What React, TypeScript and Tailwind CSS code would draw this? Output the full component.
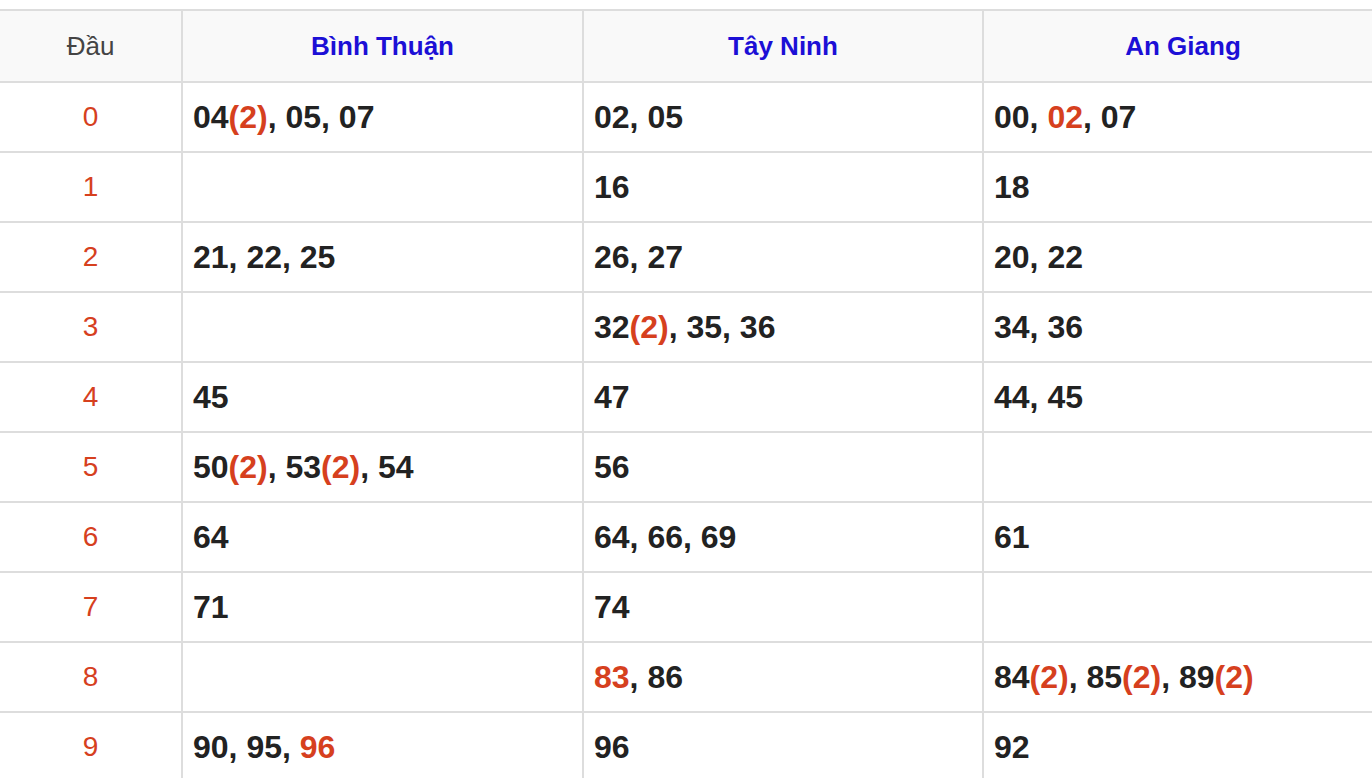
import React from 'react'

type Part = { t: string; red?: boolean }

const provinces = ['Bình Thuận', 'Tây Ninh', 'An Giang']

// each cell: list of numbers; "x2" means (2) suffix, "!" means whole number red
const rows: string[][] = [
  ['04x2, 05, 07', '02, 05', '00, !02, 07'],
  ['', '16', '18'],
  ['21, 22, 25', '26, 27', '20, 22'],
  ['', '32x2, 35, 36', '34, 36'],
  ['45', '47', '44, 45'],
  ['50x2, 53x2, 54', '56', ''],
  ['64', '64, 66, 69', '61'],
  ['71', '74', ''],
  ['', '!83, 86', '84x2, 85x2, 89x2'],
  ['90, 95, !96', '96', '92'],
]

function parse(cell: string): Part[] {
  if (!cell) return []
  const out: Part[] = []
  cell.split(', ').forEach((n, i) => {
    if (i > 0) out.push({ t: ', ' })
    if (n.startsWith('!')) {
      out.push({ t: n.slice(1), red: true })
    } else if (n.endsWith('x2')) {
      out.push({ t: n.slice(0, -2) })
      out.push({ t: '(2)', red: true })
    } else {
      out.push({ t: n })
    }
  })
  return out
}

const colW = ['w-[181px]', 'w-[401px]', 'w-[400px]', 'w-[400px]']

export default function App() {
  return (
    <div
      className="w-[1372px] h-[778px] overflow-hidden bg-white pt-[9px]"
      style={{ fontFamily: '"Liberation Sans", Arial, sans-serif' }}
    >
      <div className="w-[1382px] border-t-2 border-[#dddddd]">
        {/* Header */}
        <div className="flex h-[70px] bg-[#f9f9f9]">
          <div className={`${colW[0]} flex items-center justify-center text-[26px] text-[#444]`}>
            Đầu
          </div>
          {provinces.map((p, i) => (
            <div
              key={p}
              className={`${colW[i + 1]} border-l-2 border-[#dddddd] flex items-center justify-center text-[26px] font-bold text-[#1c0fd6]`}
            >
              {p}
            </div>
          ))}
        </div>

        {rows.map((r, idx) => (
          <div key={idx} className="flex h-[70px] border-t-2 border-[#dddddd]">
            <div className={`${colW[0]} flex items-center justify-center text-[28px] text-[#d6401e]`}>
              {idx}
            </div>
            {r.map((cell, ci) => (
              <div
                key={ci}
                className={`${colW[ci + 1]} border-l-2 border-[#dddddd] flex items-center pl-[10px] text-[32px] font-bold text-[#222]`}
              >
                <span className="whitespace-pre">
                  {parse(cell).map((p, k) =>
                    p.red ? (
                      <span key={k} className="text-[#d6401e]">
                        {p.t}
                      </span>
                    ) : (
                      <React.Fragment key={k}>{p.t}</React.Fragment>
                    )
                  )}
                </span>
              </div>
            ))}
          </div>
        ))}
      </div>
    </div>
  )
}
